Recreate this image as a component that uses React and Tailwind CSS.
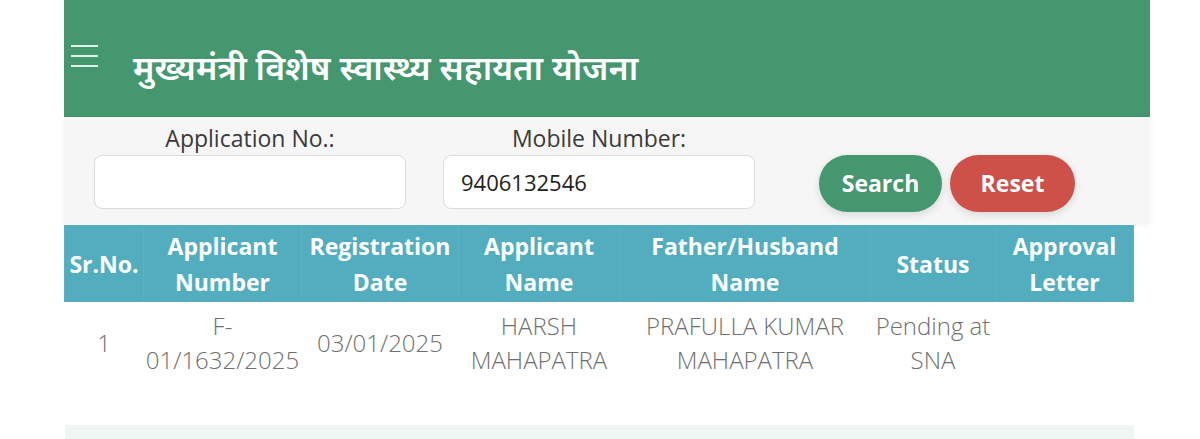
const cols = [
  { key: "sr", label: ["Sr.No."], w: "w-[79px]" },
  { key: "num", label: ["Applicant", "Number"], w: "w-[158px]" },
  { key: "date", label: ["Registration", "Date"], w: "w-[157px]" },
  { key: "name", label: ["Applicant", "Name"], w: "w-[161px]" },
  { key: "father", label: ["Father/Husband", "Name"], w: "w-[251px]" },
  { key: "status", label: ["Status"], w: "w-[125px]" },
  { key: "letter", label: ["Approval", "Letter"], w: "w-[138px]" },
];

const rows = [
  {
    sr: ["1"],
    num: ["F-", "01/1632/2025"],
    date: ["03/01/2025"],
    name: ["HARSH", "MAHAPATRA"],
    father: ["PRAFULLA KUMAR", "MAHAPATRA"],
    status: ["Pending at", "SNA"],
    letter: [],
  },
];

function Lines({ lines }) {
  return lines.map((l, i) => (
    <span key={i} className="block">
      {l}
    </span>
  ));
}

export default function App() {
  return (
    <div className="min-h-[439px] bg-white font-['Open_Sans','Noto_Sans',sans-serif]">
      <div className="ml-[64px] w-[1086px]">
        {/* top bar */}
        <header className="flex h-[117px] items-start bg-[#45976f]">
          <button className="ml-[7px] flex w-[27px] flex-col gap-[8px] pt-[45px]">
            <span className="h-[2px] bg-white/85" />
            <span className="h-[2px] bg-white/85" />
            <span className="h-[2px] bg-white/85" />
          </button>
          <h1 className="ml-[35px] mt-[55px] font-['Noto_Sans_Devanagari','Noto_Sans','Lohit_Devanagari',sans-serif] text-[34px] font-semibold leading-none text-white">
            मुख्यमंत्री विशेष स्वास्थ्य सहायता योजना
          </h1>
        </header>

        {/* search panel */}
        <section className="flex h-[106px] items-start bg-[#f6f6f7] pt-[7px] shadow-[0_2px_6px_rgba(0,0,0,0.05)]">
          <label className="ml-[30px] flex w-[312px] flex-col items-center">
            <span className="text-[23px] leading-[28px] text-[#3a3a3a]">Application No.:</span>
            <input
              className="mt-[3px] h-[54px] w-full rounded-[8px] border border-[#dadcdf] bg-white px-[17px] text-[22px] text-[#222] outline-none"
              defaultValue=""
            />
          </label>
          <label className="ml-[37px] flex w-[312px] flex-col items-center">
            <span className="text-[23px] leading-[28px] text-[#3a3a3a]">Mobile Number:</span>
            <input
              className="mt-[3px] h-[54px] w-full rounded-[8px] border border-[#dadcdf] bg-white px-[17px] text-[22px] text-[#222] outline-none"
              defaultValue="9406132546"
            />
          </label>
          <div className="ml-[64px] mt-[31px] flex gap-[8px]">
            <button className="h-[57px] w-[123px] rounded-full bg-[#44976f] text-[23px] font-bold text-white shadow-[0_3px_8px_rgba(0,0,0,0.12)]">
              Search
            </button>
            <button className="h-[57px] w-[125px] rounded-full bg-[#cd5049] text-[23px] font-bold text-white shadow-[0_3px_8px_rgba(0,0,0,0.12)]">
              Reset
            </button>
          </div>
        </section>

        {/* results */}
        <table className="mt-[2px] w-[1069px] table-fixed border-collapse">
          <thead>
            <tr className="h-[77px] bg-[#52aebf]">
              {cols.map((c) => (
                <th
                  key={c.key}
                  className={`${c.w} border-x border-[#58b2c2] px-0 text-center align-middle text-[23px] font-bold leading-[36px] text-white`}
                >
                  <Lines lines={c.label} />
                </th>
              ))}
            </tr>
          </thead>
          <tbody>
            {rows.map((r, i) => (
              <tr key={i} className="h-[123px]">
                {cols.map((c) => (
                  <td
                    key={c.key}
                    className="px-0 pb-[41px] pt-0 text-center align-middle text-[24px] font-light leading-[34px] text-[#707070]"
                  >
                    <Lines lines={r[c.key]} />
                  </td>
                ))}
              </tr>
            ))}
            <tr className="h-[14px] bg-[#eef6f3]">
              <td colSpan={7} />
            </tr>
          </tbody>
        </table>
      </div>
    </div>
  );
}
